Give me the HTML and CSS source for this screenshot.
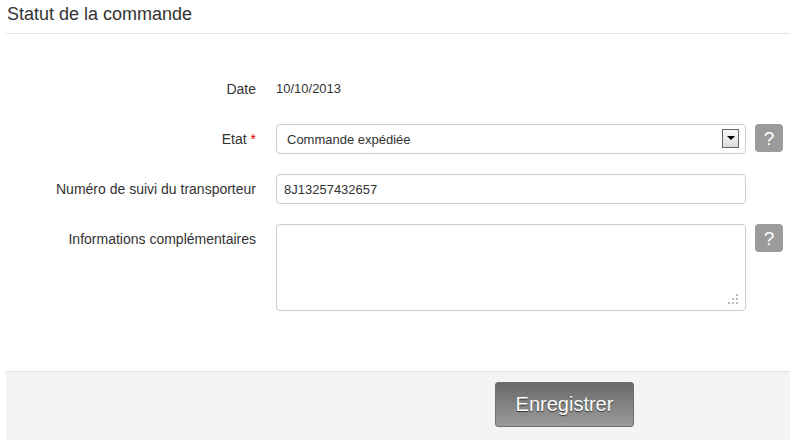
FILE: index.html
```html
<!DOCTYPE html>
<html lang="fr">
  <head>
    <meta charset="UTF-8" />
    <title>Statut de la commande</title>
    <link rel="stylesheet" href="styles.css">
  </head>
  <body>
    <div class="panel">
      <h2 class="panel-title">Statut de la commande</h2>

      <div class="form">
        <div class="form-row">
          <label class="form-label">Date</label>
          <div class="form-value">10/10/2013</div>
        </div>

        <div class="form-row">
          <label class="form-label">Etat <span class="required">*</span></label>
          <div class="select-wrap">
            <select class="field select">
              <option>Commande expédiée</option>
            </select>
            <span class="select-arrow"></span>
          </div>
          <span class="help">?</span>
        </div>

        <div class="form-row">
          <label class="form-label">Numéro de suivi du transporteur</label>
          <input class="field" type="text" value="8J13257432657" />
        </div>

        <div class="form-row">
          <label class="form-label">Informations complémentaires</label>
          <div class="textarea-wrap">
            <textarea class="field textarea"></textarea>
            <svg class="grip" width="10" height="10" viewBox="0 0 10 10">
              <rect x="8" y="0" width="2" height="2" fill="#bbb" />
              <rect x="4" y="4" width="2" height="2" fill="#bbb" />
              <rect x="8" y="4" width="2" height="2" fill="#bbb" />
              <rect x="0" y="8" width="2" height="2" fill="#bbb" />
              <rect x="4" y="8" width="2" height="2" fill="#bbb" />
              <rect x="8" y="8" width="2" height="2" fill="#bbb" />
            </svg>
          </div>
          <span class="help">?</span>
        </div>
      </div>

      <div class="form-actions">
        <button class="btn-save">Enregistrer</button>
      </div>
    </div>
  </body>
</html>
```

FILE: styles.css
```css
body {
    font-family: Arial, "Liberation Sans", sans-serif;
    font-size: 14px;
    color: #333;
    margin: 0;
    background-color: #fff;
}

.panel {
    margin-left: 6px;
    height: 440px;
    display: flex;
    flex-direction: column;
}

.panel-title {
    margin: 0;
    padding: 4px 0 0 1px;
    font-size: 18px;
    font-weight: normal;
    color: #333;
    border-bottom: 1px solid #e5e5e5;
    line-height: 21px;
    box-sizing: border-box;
    height: 34px;
}

.form {
    padding-top: 40px;
    display: flex;
    flex-direction: column;
    gap: 20px;
    height: 337px;
    box-sizing: border-box;
    flex-shrink: 0;
}

.form-row {
    display: grid;
    grid-template-columns: 250px 470px 28px;
    column-gap: 20px;
    align-items: start;
}

.form-row .help {
    margin-left: -11px;
}

.form-label {
    text-align: right;
    line-height: 30px;
}

.required {
    color: #d00;
}

.form-value {
    font-size: 13px;
    line-height: 30px;
}

.field {
    width: 100%;
    box-sizing: border-box;
    height: 30px;
    border: 1px solid #ccc;
    border-radius: 4px;
    background: #fff;
    font-family: inherit;
    font-size: 13px;
    color: #333;
    padding: 0 7px;
    margin: 0;
    outline: none;
}

.select-wrap {
    position: relative;
}

.select {
    appearance: none;
    padding-left: 10px;
}

.select-arrow {
    position: absolute;
    right: 7px;
    top: 5px;
    width: 15px;
    height: 17px;
    border: 1px solid #666;
    background: linear-gradient(#fafafa, #dcdcdc);
}

.select-arrow::after {
    content: "";
    position: absolute;
    left: 4px;
    top: 6px;
    border-left: 4px solid transparent;
    border-right: 4px solid transparent;
    border-top: 4px solid #000;
}

.textarea-wrap {
    position: relative;
}

.textarea {
    height: 87px;
    resize: none;
    display: block;
}

.grip {
    position: absolute;
    right: 8px;
    bottom: 7px;
}

.help {
    display: block;
    width: 28px;
    height: 28px;
    border-radius: 4px;
    background: #9b9b9b;
    color: #fff;
    text-align: center;
    line-height: 29px;
    font-size: 19px;
}

.form-actions {
    flex: 1;
    background: #f4f4f4;
    border-top: 1px solid #e3e3e3;
    padding: 10px 0 0 489px;
}

.btn-save {
    width: 139px;
    height: 45px;
    border: 1px solid #6e6e6e;
    border-radius: 3px;
    background: linear-gradient(#686868, #9c9c9c);
    color: #fff;
    font-family: inherit;
    font-size: 20px;
    text-shadow: 0 1px 1px #333;
    cursor: pointer;
}

.btn-save:hover {
    background: linear-gradient(#5a5a5a, #8c8c8c);
}
```
